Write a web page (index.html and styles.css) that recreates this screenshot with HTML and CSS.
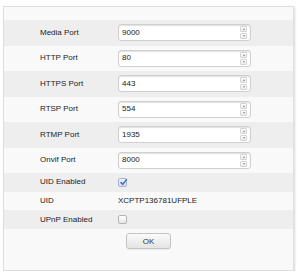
FILE: index.html
```html
<!DOCTYPE html>
<html lang="en">
<head>
  <meta charset="UTF-8" />
  <title>Network Settings</title>
  <link rel="stylesheet" href="styles.css">
</head>
<body>
  <div class="panel">
    <div class="rows">
      <div class="row">
        <span class="label">Media Port</span>
        <div class="field"><span class="value">9000</span><span class="spin"><i class="up"></i><i class="down"></i></span></div>
      </div>
      <div class="row">
        <span class="label">HTTP Port</span>
        <div class="field"><span class="value">80</span><span class="spin"><i class="up"></i><i class="down"></i></span></div>
      </div>
      <div class="row">
        <span class="label">HTTPS Port</span>
        <div class="field"><span class="value">443</span><span class="spin"><i class="up"></i><i class="down"></i></span></div>
      </div>
      <div class="row">
        <span class="label">RTSP Port</span>
        <div class="field"><span class="value">554</span><span class="spin"><i class="up"></i><i class="down"></i></span></div>
      </div>
      <div class="row">
        <span class="label">RTMP Port</span>
        <div class="field"><span class="value">1935</span><span class="spin"><i class="up"></i><i class="down"></i></span></div>
      </div>
      <div class="row">
        <span class="label">Onvif Port</span>
        <div class="field"><span class="value">8000</span><span class="spin"><i class="up"></i><i class="down"></i></span></div>
      </div>
      <div class="row small">
        <span class="label">UID Enabled</span>
        <span class="check checked">
          <svg width="9" height="9" viewBox="0 0 9 9"><path d="M2 4.6 L3.8 6.4 L7.4 1.6" fill="none" stroke="#3d6fc2" stroke-width="1.5" stroke-linecap="round" stroke-linejoin="round"/></svg>
        </span>
      </div>
      <div class="row small">
        <span class="label">UID</span>
        <span class="uid">XCPTP136781UFPLE</span>
      </div>
      <div class="row small">
        <span class="label">UPnP Enabled</span>
        <span class="check"></span>
      </div>
    </div>
    <div class="actions">
      <button class="btn">OK</button>
    </div>
  </div>
</body>
</html>
```

FILE: styles.css
```css
* {
  margin: 0;
  padding: 0;
  box-sizing: border-box;
  font-family: 'Liberation Sans', Arial, sans-serif;
}

body {
  background-color: #ffffff;
  color: #222;
  font-size: 8px;
}

.panel {
  width: 291px;
  height: 265px;
  margin: 6px 0 0 3px;
  padding-top: 13px;
  background: #f9f9f9;
  border: 1px solid #dedede;
  box-shadow: 1px 1px 2px rgba(0, 0, 0, 0.15);
}

.row {
  display: flex;
  align-items: center;
  height: 25.5px;
  padding-left: 36px;
}

.row.small {
  height: 18.7px;
}

.row:nth-child(odd) {
  background: #eeeeee;
}

.label {
  width: 78px;
  line-height: 1;
}

.field {
  display: flex;
  align-items: center;
  justify-content: space-between;
  width: 133px;
  height: 17px;
  padding: 0 3px 0 3px;
  background: #fff;
  border: 1px solid #cfcfcf;
  border-radius: 3px;
  box-shadow: inset 0 1px 1px rgba(0, 0, 0, 0.12);
}

.value {
  line-height: 1;
  color: #222;
}

.spin {
  display: flex;
  flex-direction: column;
  gap: 1px;
}

.spin i {
  display: flex;
  align-items: center;
  justify-content: center;
  width: 7px;
  height: 6px;
  border: 1px solid #d4d4d4;
  border-radius: 1px;
  background: linear-gradient(#fdfdfd, #ececec);
}

.spin i::after {
  content: '';
  width: 0;
  height: 0;
  border-left: 1.5px solid transparent;
  border-right: 1.5px solid transparent;
}

.spin .up::after {
  border-bottom: 2px solid #8a8a8a;
}

.spin .down::after {
  border-top: 2px solid #8a8a8a;
}

.check {
  display: block;
  width: 9px;
  height: 9px;
  border: 1px solid #b4b4b4;
  border-radius: 2px;
  background: linear-gradient(#ffffff, #e6e6e6);
  position: relative;
}

.check svg {
  position: absolute;
  left: -0.5px;
  top: -1px;
}

.check.checked {
  border-color: #a8b4c6;
  background: linear-gradient(#eef3fa, #d6e0ee);
}

.uid {
  line-height: 1;
  color: #222;
}

.actions {
  display: flex;
  justify-content: center;
  padding-top: 4px;
}

.btn {
  width: 45px;
  height: 16px;
  font-size: 8px;
  color: #333;
  background: linear-gradient(#fbfbfb, #e4e4e4);
  border: 1px solid #c4c4c4;
  border-radius: 3px;
  box-shadow: 0 1px 1px rgba(0, 0, 0, 0.06);
}
```
